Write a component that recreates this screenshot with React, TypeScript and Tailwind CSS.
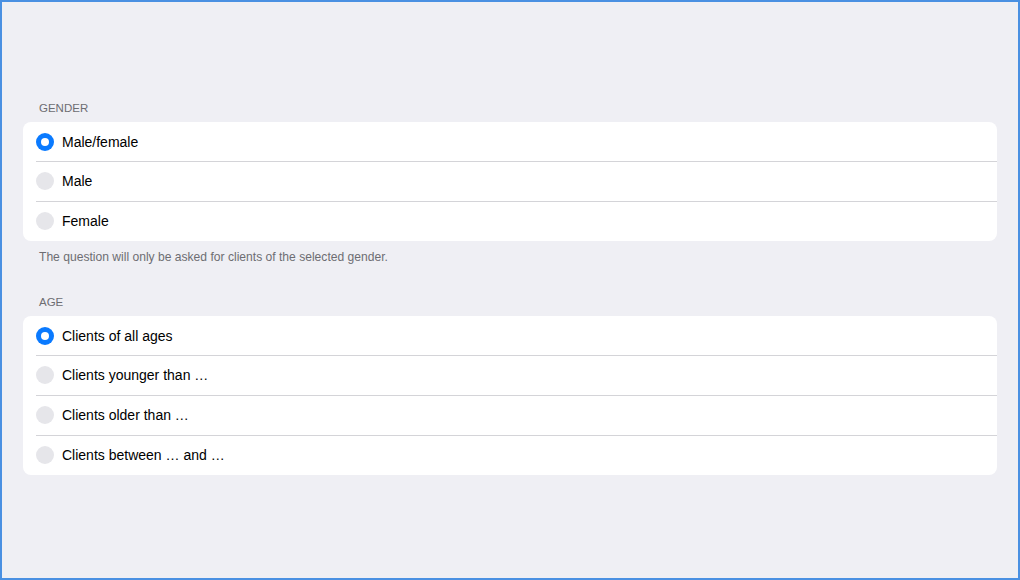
import React from 'react';

interface Option {
  id: string;
  label: string;
}

const GENDER_OPTIONS: Option[] = [
  { id: 'all', label: 'Male/female' },
  { id: 'male', label: 'Male' },
  { id: 'female', label: 'Female' },
];

const AGE_OPTIONS: Option[] = [
  { id: 'all', label: 'Clients of all ages' },
  { id: 'younger', label: 'Clients younger than …' },
  { id: 'older', label: 'Clients older than …' },
  { id: 'between', label: 'Clients between … and …' },
];

const Radio: React.FC<{ checked: boolean }> = ({ checked }) =>
  checked ? (
    <span className="w-[18px] h-[18px] rounded-full bg-[#0a7aff] flex items-center justify-center shrink-0">
      <span className="w-[8px] h-[8px] rounded-full bg-white"></span>
    </span>
  ) : (
    <span className="w-[18px] h-[18px] rounded-full bg-[#e6e6ea] shrink-0"></span>
  );

interface GroupProps {
  title: string;
  options: Option[];
  value: string;
  onChange: (id: string) => void;
  footer?: string;
}

const RadioGroup: React.FC<GroupProps> = ({ title, options, value, onChange, footer }) => (
  <section className="flex flex-col">
    <h2 className="pl-4 text-[11.5px] leading-4 text-[#6d6d72] uppercase mb-[6px]">{title}</h2>
    <div className="bg-white rounded-lg flex flex-col">
      {options.map((opt, i) => (
        <button
          key={opt.id}
          onClick={() => onChange(opt.id)}
          className="flex items-stretch pl-[13px] text-left"
        >
          <div className={`flex items-center gap-[8px] w-full ${i > 0 ? 'border-t border-[#d4d4d8] h-[40px] pb-px' : 'h-[39px] pt-px'}`}>
            <Radio checked={value === opt.id} />
            <span className="text-[14px] leading-5 text-black">{opt.label}</span>
          </div>
        </button>
      ))}
    </div>
    {footer && (
      <p className="pl-4 mt-[8px] text-[12.1px] leading-4 text-[#6d6d72]">{footer}</p>
    )}
  </section>
);

export default function App() {
  const [gender, setGender] = React.useState('all');
  const [age, setAge] = React.useState('all');

  return (
    <div
      className="w-[1020px] h-[580px] border-2 border-[#4a90e2] bg-[#efeff4] px-[21px] pt-[98px] flex flex-col"
      style={{ fontFamily: '"Liberation Sans", Arial, sans-serif' }}
    >
      <RadioGroup
        title="Gender"
        options={GENDER_OPTIONS}
        value={gender}
        onChange={setGender}
        footer="The question will only be asked for clients of the selected gender."
      />
      <div className="mt-[29px]">
        <RadioGroup title="Age" options={AGE_OPTIONS} value={age} onChange={setAge} />
      </div>
    </div>
  );
}
